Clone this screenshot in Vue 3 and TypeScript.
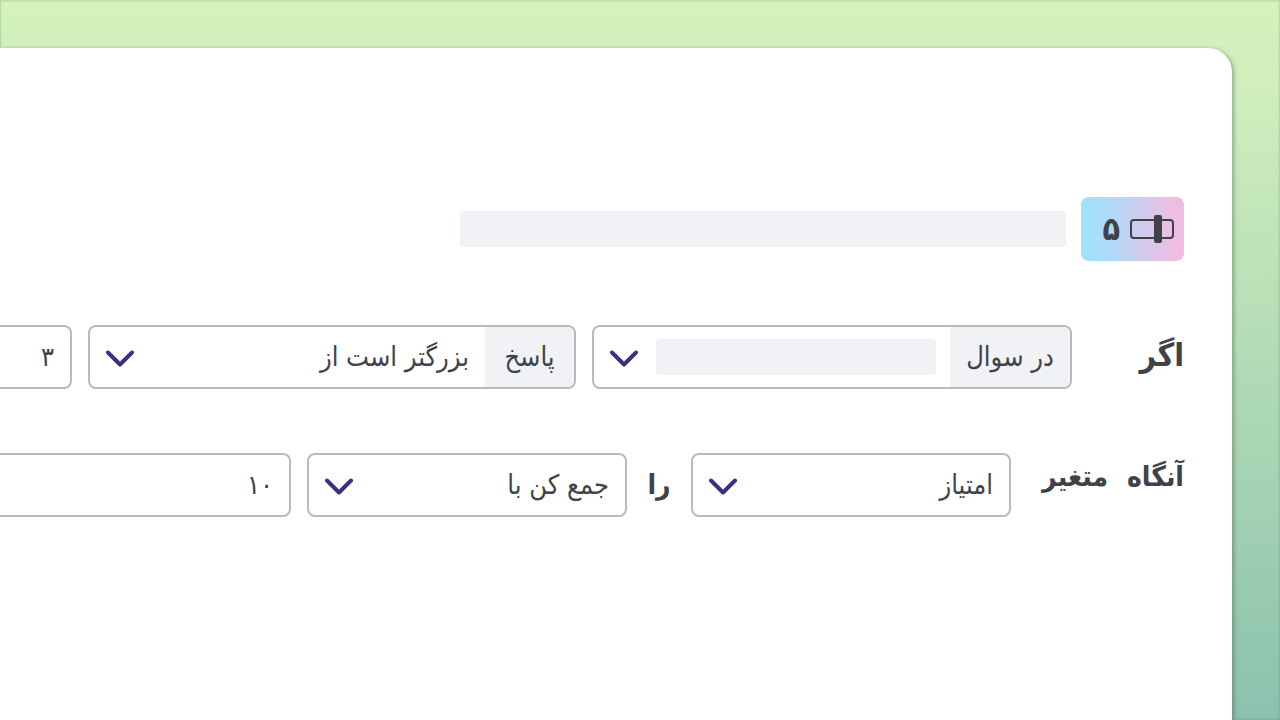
<script setup lang="ts">
import { ref } from 'vue'

const question = ref('')
const comparison = ref('gt')
const threshold = ref('۳')
const variable = ref('score')
const operation = ref('add')
const amount = ref('۱۰')
</script>

<template>
  <div class="page" dir="rtl" lang="fa">
    <main class="card">
      <header class="question">
        <div class="badge">
          <svg width="46" height="30" viewBox="0 0 46 30" aria-hidden="true">
            <rect x="2" y="6" width="42" height="18" rx="3" fill="none" stroke="#40424a" stroke-width="2" />
            <rect x="25" y="1" width="8" height="28" rx="2" fill="#40424a" />
          </svg>
          <span class="number">۵</span>
        </div>
        <div class="placeholder title-bar"></div>
      </header>

      <form class="rules" @submit.prevent>
        <div class="row">
          <span class="word if-word">اگر</span>
          <div class="field question-field">
            <label class="prefix source-prefix" for="question">در سوال</label>
            <div class="control">
              <select id="question" v-model="question">
                <option value=""></option>
              </select>
              <div class="placeholder value-bar"></div>
              <svg class="chevron" width="28" height="18" viewBox="0 0 28 18" aria-hidden="true">
                <path d="M2 2.5 L14 14.5 L26 2.5" />
              </svg>
            </div>
          </div>
          <div class="field comparison-field">
            <label class="prefix answer-prefix" for="comparison">پاسخ</label>
            <div class="control">
              <select id="comparison" v-model="comparison">
                <option value="gt">بزرگتر است از</option>
              </select>
              <svg class="chevron" width="28" height="18" viewBox="0 0 28 18" aria-hidden="true">
                <path d="M2 2.5 L14 14.5 L26 2.5" />
              </svg>
            </div>
          </div>
          <input v-model="threshold" class="field open-field" type="text" aria-label="بزرگتر است از" />
        </div>

        <div class="row">
          <label class="word then-word" for="variable"><span>آنگاه</span><span>متغیر</span></label>
          <div class="field short-field">
            <div class="control">
              <select id="variable" v-model="variable">
                <option value="score">امتیاز</option>
              </select>
              <svg class="chevron" width="28" height="18" viewBox="0 0 28 18" aria-hidden="true">
                <path d="M2 2.5 L14 14.5 L26 2.5" />
              </svg>
            </div>
          </div>
          <label class="word object-word" for="operation">را</label>
          <div class="field short-field">
            <div class="control">
              <select id="operation" v-model="operation">
                <option value="add">جمع کن با</option>
              </select>
              <svg class="chevron" width="28" height="18" viewBox="0 0 28 18" aria-hidden="true">
                <path d="M2 2.5 L14 14.5 L26 2.5" />
              </svg>
            </div>
          </div>
          <input v-model="amount" class="field open-field" type="text" aria-label="جمع کن با" />
        </div>
      </form>
    </main>
  </div>
</template>

<style>
body {
  margin: 0;
}
</style>

<style scoped>
.page,
.page * {
  box-sizing: border-box;
}

.page {
  display: flex;
  min-height: 100vh;
  padding: 48px 48px 0 0;
  overflow: hidden;
  color: #40424a;
  font-family: "DejaVu Sans Condensed", "DejaVu Sans", sans-serif;
  font-size: 27px;
  line-height: 36px;
  background: linear-gradient(180deg, #d4f2bb 0%, #d0efbc 12%, #8bc1ae 100%);
  box-shadow: inset 0 0 2px 1px rgba(80, 130, 80, 0.25);
}

.card {
  flex: 1;
  min-width: 0;
  padding: 149px 48px 48px 0;
  background: #fff;
  border-radius: 0 24px 0 0;
  box-shadow: 2px 1px 4px rgba(50, 80, 60, 0.4);
}

.question {
  display: flex;
  align-items: center;
  gap: 15px;
}

.badge {
  display: flex;
  align-items: center;
  gap: 9px;
  width: 103px;
  height: 64px;
  padding: 0 9px;
  border-radius: 8px;
  background: linear-gradient(90deg, #a0e2fc 0%, #a9defa 20%, #efbce2 90%);
}

.number {
  font-size: 32px;
  font-weight: 700;
}

.placeholder {
  height: 36px;
  border-radius: 4px;
  background: #f1f2f6;
}

.title-bar {
  flex: 0 1 606px;
}

.rules {
  display: flex;
  flex-direction: column;
  gap: 64px;
  margin-top: 64px;
}

.row {
  display: flex;
  height: 64px;
  gap: 16px;
}

.word {
  flex: none;
  font-size: 28px;
  font-weight: 700;
  white-space: nowrap;
}

.if-word {
  width: 96px;
  padding-top: 12px;
  font-size: 32px;
}

.then-word {
  display: flex;
  justify-content: space-between;
  width: 142px;
  padding-top: 6px;
  margin-left: 15px;
}

.object-word {
  width: 32px;
  padding-top: 14px;
  text-align: center;
}

.field {
  display: flex;
  flex: none;
  overflow: hidden;
  border: 2px solid #b9babc;
  border-radius: 8px;
  background: #fff;
}

.question-field {
  width: 480px;
}

.comparison-field {
  width: 488px;
}

.short-field {
  width: 320px;
}

.prefix {
  display: flex;
  flex: none;
  align-items: center;
  justify-content: center;
  background: #f1f2f6;
  white-space: nowrap;
}

.source-prefix {
  width: 120px;
}

.answer-prefix {
  width: 89px;
}

.control {
  display: grid;
  flex: 1;
  align-items: center;
  min-width: 0;
}

.control > * {
  grid-area: 1 / 1;
}

select,
input {
  min-width: 0;
  margin: 0;
  color: inherit;
  font: inherit;
  outline: 0;
}

select {
  width: 100%;
  height: 60px;
  padding: 0 16px 0 56px;
  border: 0;
  appearance: none;
  background: transparent;
}

.value-bar {
  margin: 0 14px 0 62px;
  pointer-events: none;
}

.chevron {
  justify-self: end;
  margin: 4px 0 0 16px;
  fill: none;
  stroke: #3d307f;
  stroke-width: 4;
  stroke-linecap: round;
  stroke-linejoin: round;
  pointer-events: none;
}

.open-field {
  flex: 1;
  padding: 0 16px 0 0;
  border-left: 0;
  border-radius: 0 8px 8px 0;
}
</style>
